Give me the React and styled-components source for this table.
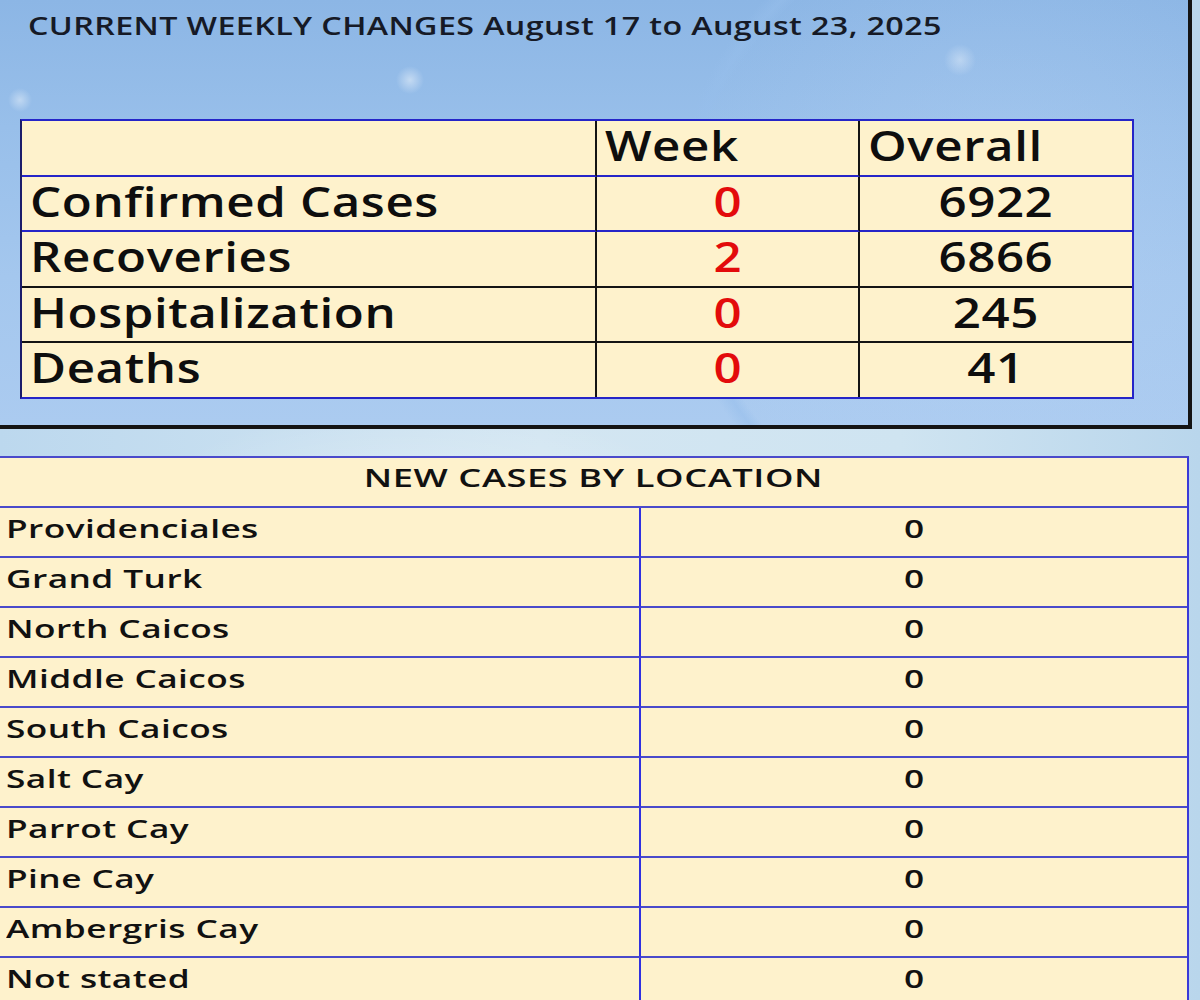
import React from "react";
import styled, { createGlobalStyle } from "styled-components";

const GlobalStyle = createGlobalStyle`
  html, body {
    margin: 0;
    padding: 0;
    background: #c4ddef;
  }
  body {
    font-family: "Open Sans", "Noto Sans", "Liberation Sans", sans-serif;
  }
`;

const Page = styled.div`
  width: 1200px;
  height: 1000px;
  overflow: hidden;
  display: flex;
  flex-direction: column;
  background:
    radial-gradient(ellipse 420px 160px at 420px 520px, rgba(255,255,255,0.35), rgba(255,255,255,0) 70%),
    linear-gradient(90deg, #bcd8ee 0%, #d3e6f2 45%, #cfe4f1 75%, #b9d6ec 100%);
`;

const TopPanel = styled.section`
  flex-shrink: 0;
  width: 1188px;
  height: 425px;
  box-sizing: content-box;
  border-right: 4px solid #141414;
  border-bottom: 4px solid #141414;
  display: flex;
  flex-direction: column;
  background:
    radial-gradient(circle 14px at 410px 80px, rgba(255,255,255,0.45), rgba(255,255,255,0) 100%),
    radial-gradient(circle 12px at 20px 100px, rgba(255,255,255,0.4), rgba(255,255,255,0) 100%),
    radial-gradient(circle 16px at 960px 60px, rgba(255,255,255,0.35), rgba(255,255,255,0) 100%),
    radial-gradient(circle 330px at 1000px 230px, rgba(190,215,245,0) 93%, rgba(150,190,235,0.55) 96%, rgba(190,215,245,0) 100%),
    radial-gradient(circle 330px at 1000px 230px, rgba(185,212,245,0.35), rgba(185,212,245,0) 100%),
    linear-gradient(180deg, #8cb6e5 0%, #98bfea 30%, #a4c7ee 65%, #abcbf0 100%);
`;

/* Text in the reference is rendered horizontally widened; Wide reproduces that. */
const Wide = styled.span`
  display: inline-block;
  white-space: nowrap;
  transform: scaleX(${(p) => p.$x});
  transform-origin: ${(p) => (p.$center ? "center" : "left")} center;
`;

const Title = styled.h1`
  flex-shrink: 0;
  margin: 0;
  padding: 8px 0 0 28px;
  height: 119px;
  box-sizing: border-box;
  font-size: 25px;
  line-height: 34px;
  font-weight: 600;
  color: #161a26;
  letter-spacing: 0.3px;
  white-space: nowrap;
`;

const StatsTable = styled.table`
  flex-shrink: 0;
  margin-left: 20px;
  width: 1114px;
  border-spacing: 0;
  table-layout: fixed;
  background: #fef2cc;
  border-top: 2px solid #2525c8;
  border-left: 2px solid #1c1c6a;
  border-right: 2px solid #2525c8;
  border-bottom: 2px solid #2525c8;
`;

const StatCell = styled.td`
  height: ${(p) => p.$h}px;
  padding: 0 0 5px ${(p) => (p.$align === "center" ? 0 : 8)}px;
  box-sizing: border-box;
  font-size: 41px;
  font-weight: 600;
  line-height: 1;
  color: ${(p) => (p.$red ? "#e30b0b" : "#0e0e0e")};
  text-align: ${(p) => p.$align || "left"};
  border-bottom: ${(p) => (p.$line ? `2px solid ${p.$line}` : "none")};
  border-right: ${(p) => (p.$last ? "none" : "2px solid #141414")};
  vertical-align: middle;
  white-space: nowrap;
  letter-spacing: 0.5px;
`;

const LocationWrap = styled.section`
  flex-shrink: 0;
  padding-top: 27px;
`;

const LocationTable = styled.table`
  width: 1189px;
  border-spacing: 0;
  table-layout: fixed;
  background: #fef2cc;
  border-top: 2px solid #4a4acb;
  border-right: 2px solid #3a3ad8;
`;

const LocHead = styled.th`
  height: 50px;
  padding: 0 0 10px;
  box-sizing: border-box;
  font-size: 25px;
  font-weight: 600;
  color: #111;
  text-align: center;
  border-bottom: 2px solid #4a4acb;
  letter-spacing: 0.4px;
`;

const LocCell = styled.td`
  height: 50px;
  padding: 0 0 9px ${(p) => (p.$center ? 0 : 6)}px;
  box-sizing: border-box;
  font-size: 25px;
  font-weight: 600;
  color: #111;
  text-align: ${(p) => (p.$center ? "center" : "left")};
  border-bottom: 2px solid #4a4acb;
  border-right: ${(p) => (p.$divider ? "2px solid #3030e0" : "none")};
  white-space: nowrap;
  letter-spacing: 0.3px;
`;

const stats = [
  { label: "Confirmed Cases", week: "0", overall: "6922", line: "#2525c8", h: 55 },
  { label: "Recoveries", week: "2", overall: "6866", line: "#141414", h: 56 },
  { label: "Hospitalization", week: "0", overall: "245", line: "#141414", h: 55 },
  { label: "Deaths", week: "0", overall: "41", line: null, h: 54 },
];

const locations = [
  "Providenciales",
  "Grand Turk",
  "North Caicos",
  "Middle Caicos",
  "South Caicos",
  "Salt Cay",
  "Parrot Cay",
  "Pine Cay",
  "Ambergris Cay",
  "Not stated",
];

const SX = 1.2;
const LX = 1.41;

export default function App() {
  return (
    <>
      <GlobalStyle />
      <Page>
        <TopPanel>
          <Title>
            <Wide $x={1.29}>CURRENT WEEKLY CHANGES August 17 to August 23, 2025</Wide>
          </Title>
          <StatsTable>
            <colgroup>
              <col style={{ width: 575 }} />
              <col style={{ width: 263 }} />
              <col style={{ width: 272 }} />
            </colgroup>
            <thead>
              <tr>
                <StatCell as="th" $h={56} $line="#2525c8"></StatCell>
                <StatCell as="th" $h={56} $line="#2525c8">
                  <Wide $x={SX}>Week</Wide>
                </StatCell>
                <StatCell as="th" $h={56} $line="#2525c8" $last>
                  <Wide $x={SX}>Overall</Wide>
                </StatCell>
              </tr>
            </thead>
            <tbody>
              {stats.map((r) => (
                <tr key={r.label}>
                  <StatCell $h={r.h} $line={r.line}>
                    <Wide $x={SX}>{r.label}</Wide>
                  </StatCell>
                  <StatCell $h={r.h} $line={r.line} $red $align="center">
                    <Wide $x={SX} $center>{r.week}</Wide>
                  </StatCell>
                  <StatCell $h={r.h} $line={r.line} $align="center" $last>
                    <Wide $x={SX} $center>{r.overall}</Wide>
                  </StatCell>
                </tr>
              ))}
            </tbody>
          </StatsTable>
        </TopPanel>
        <LocationWrap>
          <LocationTable>
            <colgroup>
              <col style={{ width: 641 }} />
              <col style={{ width: 546 }} />
            </colgroup>
            <thead>
              <tr>
                <LocHead colSpan={2}>
                  <Wide $x={1.45} $center>NEW CASES BY LOCATION</Wide>
                </LocHead>
              </tr>
            </thead>
            <tbody>
              {locations.map((name) => (
                <tr key={name}>
                  <LocCell $divider>
                    <Wide $x={LX}>{name}</Wide>
                  </LocCell>
                  <LocCell $center>
                    <Wide $x={LX} $center>0</Wide>
                  </LocCell>
                </tr>
              ))}
            </tbody>
          </LocationTable>
        </LocationWrap>
      </Page>
    </>
  );
}
